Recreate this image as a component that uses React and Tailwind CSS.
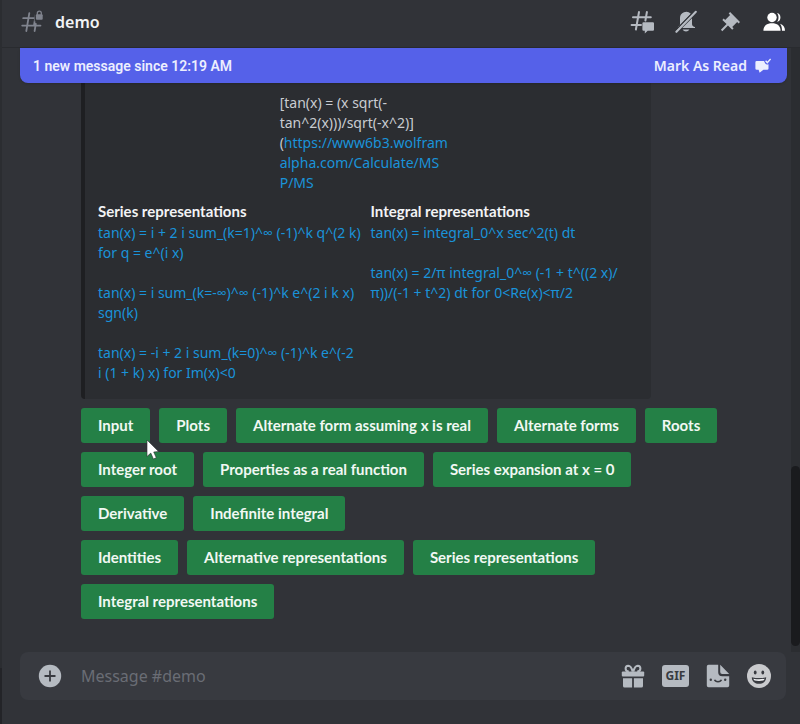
const FONT = "font-['Noto_Sans','Open_Sans',sans-serif]";

function ChannelIcon() {
  return (
    <svg className="size-6 text-[#80848e]" viewBox="0 0 24 24" fill="none" stroke="currentColor" strokeWidth="1.8" strokeLinecap="round" aria-hidden="true">
      <path d="M9.3 3.2 6.3 21M15.8 13.8 14.6 21M3.2 8.2H15.5M2.2 15.6H20.5M15.2 8.2l-1.1 6.4M16 3.2 15.2 8" />
      <rect x="14.6" y="0" width="9.4" height="11.5" fill="#313338" stroke="none" />
      <rect x="15.9" y="4.3" width="6.8" height="5.4" rx="1" fill="currentColor" stroke="none" />
      <path d="M17.3 4.6V3.2a2 2 0 0 1 4 0v1.4" strokeWidth="1.3" />
    </svg>
  );
}

function ThreadsIcon() {
  return (
    <svg className="size-6" viewBox="0 0 24 24" fill="none" stroke="currentColor" strokeWidth="2" strokeLinecap="round" aria-hidden="true">
      <path d="M9 2 5.900 19.500M16.900 2 15.400 10.500M3 7.300H20.800M1.600 15H11" />
      <path d="M13.500 12.200h9.400a1.100 1.100 0 0 1 1.100 1.100v6.400a1.100 1.100 0 0 1-1.100 1.100h-5.200L14.800 23.400v-2.600h-1.300a1.100 1.100 0 0 1-1.100-1.100v-6.400a1.100 1.100 0 0 1 1.100-1.100Z" fill="currentColor" stroke="none" />
    </svg>
  );
}

function BellSlashIcon() {
  return (
    <svg className="size-6" viewBox="0 0 24 24" fill="currentColor" aria-hidden="true">
      <path d="M18 9v5c0 1.660 1.340 3 3 3v1H8.200L18 8.200V9Z" />
      <path d="M16.800 3.800 3.600 17.500c1.400-.5 2.400-1.800 2.400-3.500V8a6.200 6.200 0 0 1 10.800-4.200Z" />
      <path d="M8.600 19.500h6.800c-.7 1.200-2 2-3.400 2s-2.700-.8-3.400-2Z" />
      <path d="M21.800 1.800 2.400 21.800" stroke="currentColor" strokeWidth="2.200" strokeLinecap="round" />
      <path d="M20.200 1 1.400 20.400" stroke="#313338" strokeWidth="1" />
    </svg>
  );
}

function PinIcon() {
  return (
    <svg className="size-6" viewBox="0 0 24 24" fill="currentColor" aria-hidden="true">
      <path d="M22 12 12.101 2.101 10.686 3.514 12.101 4.929 7.150 9.878V9.880L5.736 8.465 4.322 9.880 8.565 14.122 2.908 19.778 4.322 21.192 9.979 15.536 14.221 19.778 15.636 18.364 14.221 16.950 19.171 12H19.172L20.586 13.414 22 12Z" />
    </svg>
  );
}

function MembersIcon() {
  return (
    <svg className="size-6 text-white" viewBox="0 0 24 24" fill="currentColor" aria-hidden="true">
      <circle cx="10" cy="7.500" r="4.700" />
      <path d="M10 13.300c-5 0-8.600 2.500-8.600 7.400h17.200c0-4.900-3.600-7.400-8.600-7.400Z" />
      <path d="M15 3.100a4.600 4.600 0 0 1 0 8.900c1-1.200 1.500-2.800 1.500-4.500S16 4.200 15 3.100Z" />
      <path d="M18 13.700c3.200 1 5 3.500 5 7h-3c0-3-.5-5.200-2-7Z" />
    </svg>
  );
}

function MarkReadIcon() {
  return (
    <svg className="size-4" viewBox="0 0 16 16" fill="currentColor" aria-hidden="true">
      <path d="M1.700 3h7.300l1.100 2.200a2.600 2.600 0 0 0 3.400 1V10.500a1.300 1.300 0 0 1-1.300 1.300H8.400L4.600 14.800 3.600 11.800H1.700A1.300 1.300 0 0 1 .4 10.500V4.300A1.300 1.300 0 0 1 1.700 3Z" />
      <path d="m10.600 2.800 1.700 1.800L15.600.9" fill="none" stroke="currentColor" strokeWidth="1.400" />
    </svg>
  );
}

function PlusCircleIcon() {
  return (
    <svg className="size-6" viewBox="0 0 24 24" aria-hidden="true">
      <circle cx="12" cy="12" r="11.200" fill="currentColor" />
      <path d="M12 6.500v11M6.500 12h11" stroke="#383a40" strokeWidth="1.800" />
    </svg>
  );
}

function GiftIcon() {
  return (
    <svg className="size-6" viewBox="0 0 24 24" fill="currentColor" aria-hidden="true">
      <rect x=".8" y="7.600" width="22.400" height="5" rx="1" />
      <path d="M2 14.300h9.100v9.300H3.600A1.600 1.600 0 0 1 2 22v-7.700ZM12.900 14.300H22V22a1.600 1.600 0 0 1-1.600 1.600h-7.500v-9.300Z" />
      <path d="M11.600 7.600C10.800 4 9.300 1.700 7.200 1.700A2.700 2.700 0 0 0 4.600 4.400c0 1.900 1.300 3.100 3.200 3.100M12.400 7.600c.8-3.600 2.300-5.900 4.400-5.900a2.700 2.700 0 0 1 2.600 2.700c0 1.900-1.300 3.100-3.200 3.100" fill="none" stroke="currentColor" strokeWidth="2" />
    </svg>
  );
}

function StickerIcon() {
  return (
    <svg className="size-6" viewBox="0 0 24 24" aria-hidden="true">
      <path d="M2.500.8h9.700v7.500a4 4 0 0 0 4 4h7v9.200a1.700 1.700 0 0 1-1.700 1.700h-19A1.700 1.700 0 0 1 .8 21.500v-19A1.700 1.700 0 0 1 2.500.8Z" fill="currentColor" />
      <path d="M14.200.8l9 9.300h-7a2 2 0 0 1-2-2Z" fill="currentColor" />
      <circle cx="4.800" cy="15.800" r="1.200" fill="#383a40" />
      <circle cx="19.200" cy="15.800" r="1.200" fill="#383a40" />
      <path d="M8.600 15.800c.8 2.600 6 2.600 6.800 0" fill="none" stroke="#383a40" strokeWidth="1.500" />
    </svg>
  );
}

function SmileIcon() {
  return (
    <svg className="size-6" viewBox="0 0 24 24" aria-hidden="true">
      <circle cx="12" cy="12" r="12" fill="#c9cacd" />
      <ellipse cx="8.200" cy="8.600" rx="1.400" ry="2" fill="#383a40" />
      <ellipse cx="15.800" cy="8.600" rx="1.400" ry="2" fill="#383a40" />
      <path d="M4.800 13.200c4.800 1.200 9.600 1.200 14.400 0 0 4-3 6.600-7.200 6.600s-7.200-2.600-7.200-6.600Z" fill="#383a40" />
      <path d="M6.300 14.700c3.800.8 7.600.8 11.400 0-.3.900-.8 1.500-1.300 1.800-2.900.5-5.900.5-8.800 0-.6-.4-1-1-1.300-1.800Z" fill="#f2f3f5" />
    </svg>
  );
}

function MouseCursor() {
  return (
    <svg className="pointer-events-none absolute top-8 left-16 z-10 h-5 w-4" viewBox="0 0 16 20" aria-hidden="true">
      <path d="M2 0v16.500l3.800-3.400 2.600 5.900 2.900-1.300-2.600-5.700 4.900-.4L2 0Z" fill="#fff" stroke="#2b2d31" strokeWidth=".6" />
    </svg>
  );
}

function Header() {
  return (
    <header className="flex h-12 shrink-0 items-center border-b border-[#292b2f] pr-3.5 pb-1 pl-[18px]">
      <ChannelIcon />
      <h1 className="flex-1 pl-[11px] text-base leading-6 font-semibold text-[#f2f3f5]">demo</h1>
      <nav className="flex items-center gap-5 text-[#b5bac1]" aria-label="Channel tools">
        <button type="button" aria-label="Threads" className="block"><ThreadsIcon /></button>
        <button type="button" aria-label="Notification settings" className="block"><BellSlashIcon /></button>
        <button type="button" aria-label="Pinned messages" className="block"><PinIcon /></button>
        <button type="button" aria-label="Member list" className="block"><MembersIcon /></button>
      </nav>
    </header>
  );
}

function NewMessageBar() {
  return (
    <div className="absolute inset-x-0 top-0 z-10 flex h-[35px] pr-[13px] pl-[18px]">
      <div className="flex flex-1 items-center justify-between rounded-b-lg bg-[#5561e9] pr-4 pl-[13px] text-sm font-semibold text-[#eceefe] shadow-sm">
        <button type="button" className="font-[Roboto,'Noto_Sans',sans-serif]">1 new message since 12:19 AM</button>
        <button type="button" className="flex items-center gap-2">
          Mark As Read
          <MarkReadIcon />
        </button>
      </div>
    </div>
  );
}

const seriesForms = [
  ["tan(x) = i + 2 i sum_(k=1)^∞ (-1)^k q^(2 k)", "for q = e^(i x)"],
  ["tan(x) = i sum_(k=-∞)^∞ (-1)^k e^(2 i k x)", "sgn(k)"],
  ["tan(x) = -i + 2 i sum_(k=0)^∞ (-1)^k e^(-2", "i (1 + k) x) for Im(x)<0"],
];

const integralForms = [
  ["tan(x) = integral_0^x sec^2(t) dt"],
  ["tan(x) = 2/π integral_0^∞ (-1 + t^((2 x)/", "π))/(-1 + t^2) dt for 0<Re(x)<π/2"],
];

function Field({ title, forms }) {
  return (
    <section className="col-span-3">
      <h2 className="font-[Lato,'Noto_Sans',sans-serif] text-[15px] leading-5 font-bold text-[#f2f3f5]">{title}</h2>
      <div className="mt-0.5 flex flex-col gap-5">
        {forms.map((lines) => (
          <a key={lines[0]} href="#formula" className="block whitespace-nowrap text-[#1a93d9]">
            {lines.map((line) => (
              <span key={line} className="block">{line}</span>
            ))}
          </a>
        ))}
      </div>
    </section>
  );
}

function Embed() {
  return (
    <article className="grid w-[570px] grid-cols-6 gap-x-2 gap-y-2 rounded border-l-4 border-[#1e1f22] bg-[#2b2d31] pt-4 pr-4 pb-4 pl-[13px] text-sm leading-5 text-[#c9ccd1]">
      <p className="col-span-2 col-start-3 whitespace-nowrap">
        [tan(x) = (x sqrt(-<br />
        tan^2(x)))/sqrt(-x^2)]<br />
        (<a href="#image" className="text-[#1a93d9]">https://www6b3.wolfram<br />
        alpha.com/Calculate/MS<br />
        P/MS</a>
      </p>
      <Field title="Series representations" forms={seriesForms} />
      <Field title="Integral representations" forms={integralForms} />
    </article>
  );
}

const actionRows = [
  ["Input", "Plots", "Alternate form assuming x is real", "Alternate forms", "Roots"],
  ["Integer root", "Properties as a real function", "Series expansion at x = 0", "Derivative", "Indefinite integral"],
  ["Identities", "Alternative representations", "Series representations", "Integral representations"],
];

function ActionRows() {
  return (
    <div className="relative flex max-w-[650px] flex-col gap-[9px]">
      {actionRows.map((row) => (
        <div key={row[0]} className="flex flex-wrap gap-[9px]">
          {row.map((label) => (
            <button key={label} type="button" className="h-[35px] rounded-[3px] bg-[#248046] px-[17px] font-[Lato,'Noto_Sans',sans-serif] text-[15px] font-bold whitespace-nowrap text-[#f1f8f3]">
              {label}
            </button>
          ))}
        </div>
      ))}
      <MouseCursor />
    </div>
  );
}

function Composer() {
  return (
    <form className="mr-3.5 mb-6 ml-[18px] flex h-12 shrink-0 items-center rounded-lg bg-[#383a40] pr-[15px] pl-[18px] text-[#b5bac1]">
      <button type="button" aria-label="Add attachment"><PlusCircleIcon /></button>
      <input
        type="text"
        aria-label="Message #demo"
        placeholder="Message #demo"
        className="ml-[19px] min-w-0 flex-1 bg-transparent text-base text-[#dbdee1] outline-none placeholder:text-[#6a6d75]"
      />
      <div className="flex items-center gap-[17px]">
        <button type="button" aria-label="Send a gift"><GiftIcon /></button>
        <button type="button" aria-label="Open GIF picker" className="flex h-[22px] w-[27px] items-center justify-center rounded-[3px] bg-[#b5bac1] text-xs font-bold text-[#383a40]">GIF</button>
        <button type="button" aria-label="Open sticker picker"><StickerIcon /></button>
        <button type="button" aria-label="Select emoji"><SmileIcon /></button>
      </div>
    </form>
  );
}

export default function App() {
  return (
    <div className={`flex h-screen overflow-hidden bg-[#313338] ${FONT}`}>
      <aside className="flex w-0.5 shrink-0 flex-col bg-[#2b2d31]">
        <div className="mt-auto h-14 bg-[#232428]" />
      </aside>
      <div className="flex min-w-0 flex-1 flex-col">
        <Header />
        <main className="relative flex min-h-0 flex-1">
          <NewMessageBar />
          <div className="flex min-w-0 flex-1 flex-col justify-end gap-[9px] overflow-hidden pb-[33px] pl-[79px]">
            <Embed />
            <ActionRows />
          </div>
          <div className="flex w-[9px] shrink-0 flex-col justify-end bg-[#2b2d31] pb-1.5">
            <div className="h-[180px] rounded-full bg-[#1a1b1e]" />
          </div>
        </main>
        <Composer />
      </div>
    </div>
  );
}
